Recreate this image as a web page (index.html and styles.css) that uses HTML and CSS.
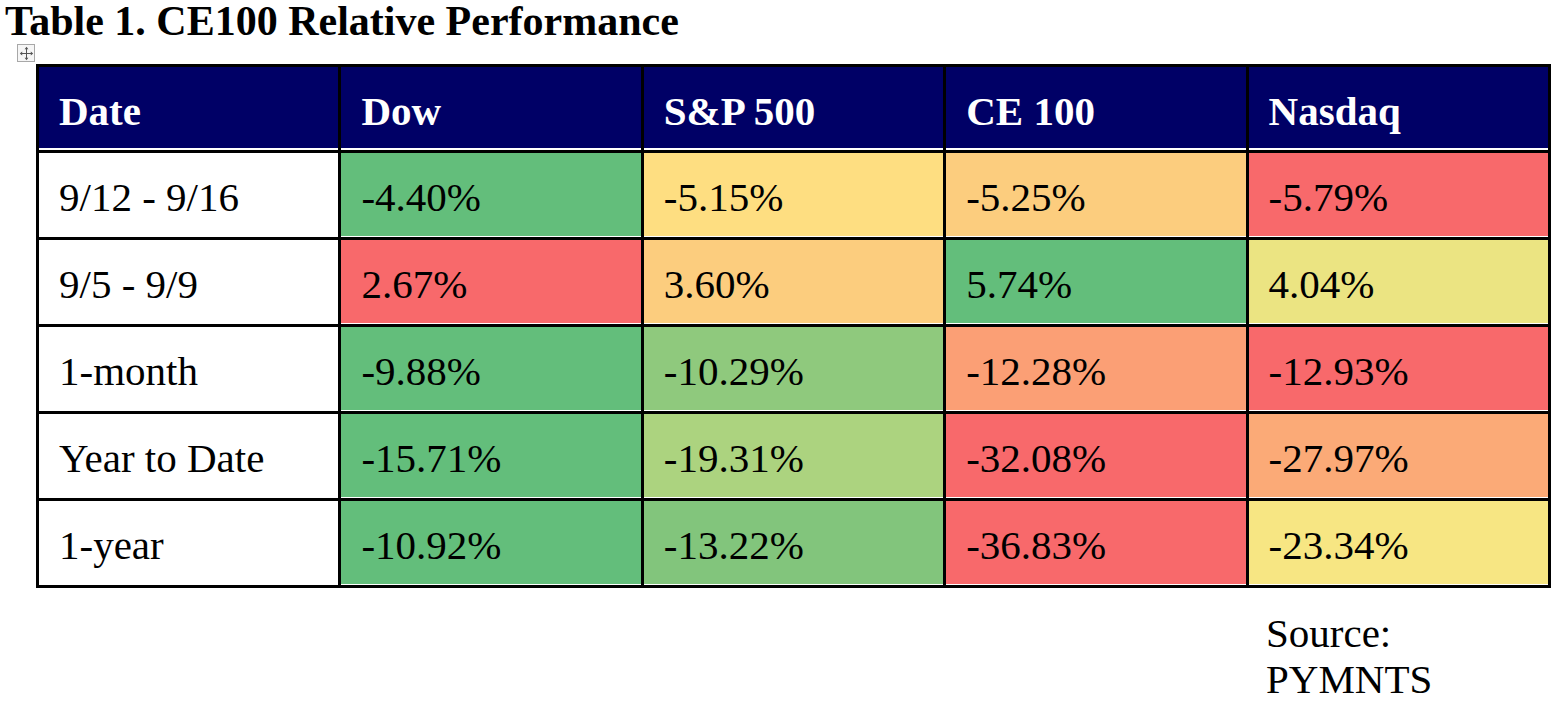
FILE: index.html
```html
<!DOCTYPE html>
<html lang="en">
<head>
<meta charset="utf-8">
<title>Table 1. CE100 Relative Performance</title>
<link rel="stylesheet" href="styles.css">
</head>
<body>
<h1 class="title">Table 1. CE100 Relative Performance</h1>
<div class="table-wrap">
  <span class="move-handle" aria-hidden="true">
    <svg width="15" height="15" viewBox="0 0 15 15">
      <path d="M7.5 2v11M2 7.5h11" stroke="#555" stroke-width="1" fill="none"/>
      <path d="M7.5 0.8L5.6 3.2h3.8zM7.5 14.2L5.6 11.8h3.8zM0.8 7.5L3.2 5.6v3.8zM14.2 7.5L11.8 5.6v3.8z" fill="#555"/>
    </svg>
  </span>
  <table class="perf">
    <thead>
      <tr>
        <th>Date</th><th>Dow</th><th>S&amp;P 500</th><th>CE 100</th><th>Nasdaq</th>
      </tr>
    </thead>
    <tbody>
      <tr>
        <td>9/12 - 9/16</td>
        <td class="c-green">-4.40%</td>
        <td class="c-yellow">-5.15%</td>
        <td class="c-lt-orange">-5.25%</td>
        <td class="c-red">-5.79%</td>
      </tr>
      <tr>
        <td>9/5 - 9/9</td>
        <td class="c-red">2.67%</td>
        <td class="c-lt-orange">3.60%</td>
        <td class="c-green">5.74%</td>
        <td class="c-yellow-green">4.04%</td>
      </tr>
      <tr>
        <td>1-month</td>
        <td class="c-green">-9.88%</td>
        <td class="c-mid-green">-10.29%</td>
        <td class="c-orange">-12.28%</td>
        <td class="c-red">-12.93%</td>
      </tr>
      <tr>
        <td>Year to Date</td>
        <td class="c-green">-15.71%</td>
        <td class="c-lime">-19.31%</td>
        <td class="c-red">-32.08%</td>
        <td class="c-orange2">-27.97%</td>
      </tr>
      <tr>
        <td>1-year</td>
        <td class="c-green">-10.92%</td>
        <td class="c-green2">-13.22%</td>
        <td class="c-red">-36.83%</td>
        <td class="c-yellow2">-23.34%</td>
      </tr>
    </tbody>
  </table>
  <div class="source-row">
    <p class="source">Source:<br>PYMNTS</p>
  </div>
</div>
</body>
</html>
```

FILE: styles.css
```css
html, body {
  margin: 0;
  padding: 0;
  background: #ffffff;
}

body {
  font-family: "Liberation Serif", "Times New Roman", serif;
  color: #000000;
}

.title {
  margin: 0;
  padding-left: 5px;
  font-size: 42px;
  line-height: 42px;
  font-weight: bold;
}

.table-wrap {
  position: relative;
  margin: 22px 0 0 36px;
  width: 1515px;
}

.move-handle {
  position: absolute;
  left: -19px;
  top: -20px;
  width: 18px;
  height: 18px;
  box-sizing: border-box;
  border: 1px solid #a8a8a8;
  background: #f6f6f6;
  display: flex;
  align-items: center;
  justify-content: center;
}

.move-handle svg {
  display: block;
}

.perf {
  width: 1515px;
  table-layout: fixed;
  border-collapse: separate;
  border-spacing: 0;
  border-top: 3px solid #000;
  border-left: 3px solid #000;
  font-size: 41px;
  line-height: 46px;
}

.perf th,
.perf td {
  border-right: 3px solid #000;
  border-bottom: 3px solid #000;
  padding: 21px 20px 0 20px;
  text-align: left;
  vertical-align: top;
  white-space: nowrap;
  box-shadow: inset 0 -1px 0 #ffffff;
}

.perf th {
  height: 62px;
  background: #000066;
  color: #ffffff;
  font-weight: bold;
  box-shadow: inset 0 -2px 0 #ffffff;
}

.perf td {
  height: 63px;
  font-weight: normal;
  background: #ffffff;
}

.c-green { background: #63be7b !important; }
.c-green2 { background: #82c57c !important; }
.c-mid-green { background: #8fc97d !important; }
.c-lime { background: #acd37f !important; }
.c-yellow-green { background: #ebe482 !important; }
.c-yellow { background: #fede81 !important; }
.c-yellow2 { background: #f7e683 !important; }
.c-lt-orange { background: #fccd7e !important; }
.c-orange { background: #fb9f75 !important; }
.c-orange2 { background: #fbaa77 !important; }
.c-red { background: #f8696b !important; }

.source-row {
  display: flex;
  justify-content: flex-end;
}

.source {
  margin: 22px 0 0 0;
  width: 285px;
  font-size: 41px;
  line-height: 46px;
}
```
